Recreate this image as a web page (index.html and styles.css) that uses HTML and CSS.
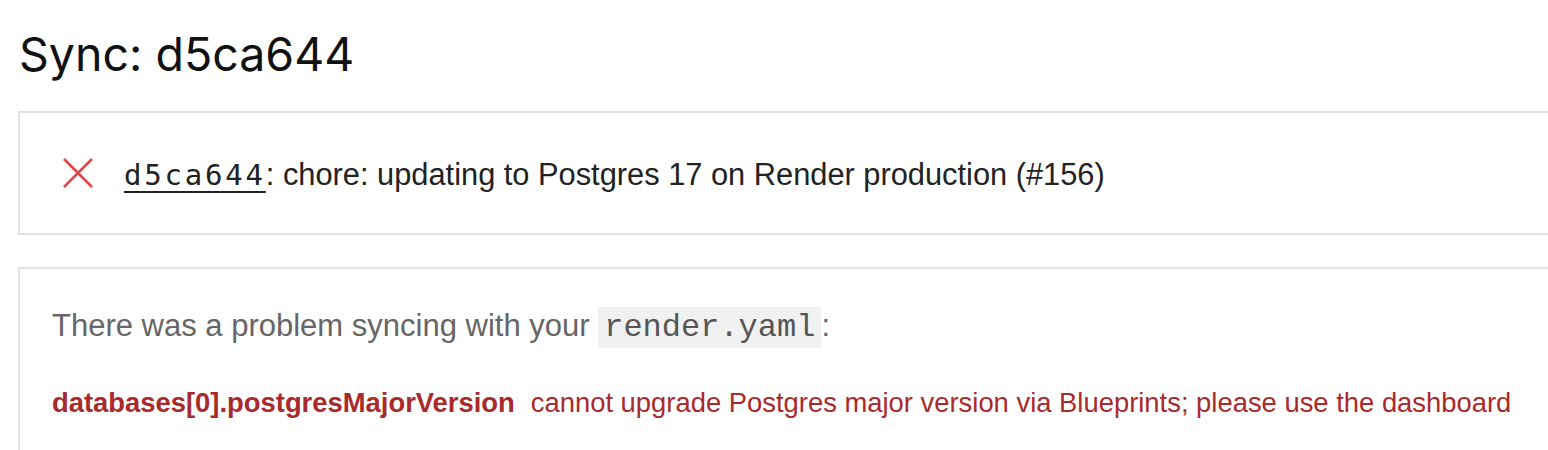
FILE: index.html
```html
<!DOCTYPE html>
<html lang="en">
<head>
  <meta charset="UTF-8">
  <title>Sync: d5ca644</title>
  <link rel="stylesheet" href="styles.css">
</head>
<body>
  <div id="page">
    <h1>Sync: d5ca644</h1>

    <section class="card commit-card">
      <svg class="fail-icon" viewBox="0 0 32 32" width="32" height="32">
        <path d="M2 2 L30 30 M30 2 L2 30" stroke="#e04848" stroke-width="2.6" fill="none"/>
      </svg>
      <p class="commit">
        <a href="#" class="sha">d5ca644</a>: chore: updating to Postgres 17 on Render production (#156)
      </p>
    </section>

    <section class="card error-card">
      <p class="intro">There was a problem syncing with your <code>render.yaml</code>:</p>
      <p class="error">
        <strong>databases[0].postgresMajorVersion</strong>
        <span>cannot upgrade Postgres major version via Blueprints; please use the dashboard</span>
      </p>
    </section>
  </div>
</body>
</html>
```

FILE: styles.css
```css
* {
  margin: 0;
  padding: 0;
  box-sizing: border-box;
}

body {
  font-family: "Liberation Sans", Arial, sans-serif;
  background-color: #fff;
  color: #222;
  overflow: hidden;
}

#page {
  width: 1580px;
  padding: 24px 0 0 18px;
}

h1 {
  font-family: Inter, "Liberation Sans", sans-serif;
  font-weight: 400;
  font-size: 46.5px;
  line-height: 60px;
  color: #111;
  padding-left: 1px;
  margin-bottom: 27px;
}

.card {
  border: 2px solid #e2e2e2;
  background-color: #fff;
}

.commit-card {
  display: flex;
  align-items: center;
  gap: 30px;
  height: 124px;
  padding-left: 42px;
  margin-bottom: 32px;
}

.commit {
  font-size: 30.8px;
  color: #222;
  padding-top: 4px;
}

.sha {
  font-family: "DejaVu Sans Mono", monospace;
  font-size: 29px;
  letter-spacing: 2.8px;
  color: #222;
  text-decoration: underline;
  text-decoration-thickness: 2px;
  text-underline-offset: 6px;
}

.error-card {
  padding: 39px 0 40px 32px;
  height: 200px;
}

.intro {
  font-size: 31px;
  color: #666;
  margin-bottom: 41px;
}

.intro code {
  font-family: "Liberation Mono", monospace;
  font-size: 32px;
  color: #555;
  background-color: #f1f1f1;
  padding: 2px 6px;
}

.error {
  font-size: 27.4px;
  color: #a82a2c;
  display: flex;
  gap: 16px;
}

.error strong {
  font-weight: 700;
}
```
